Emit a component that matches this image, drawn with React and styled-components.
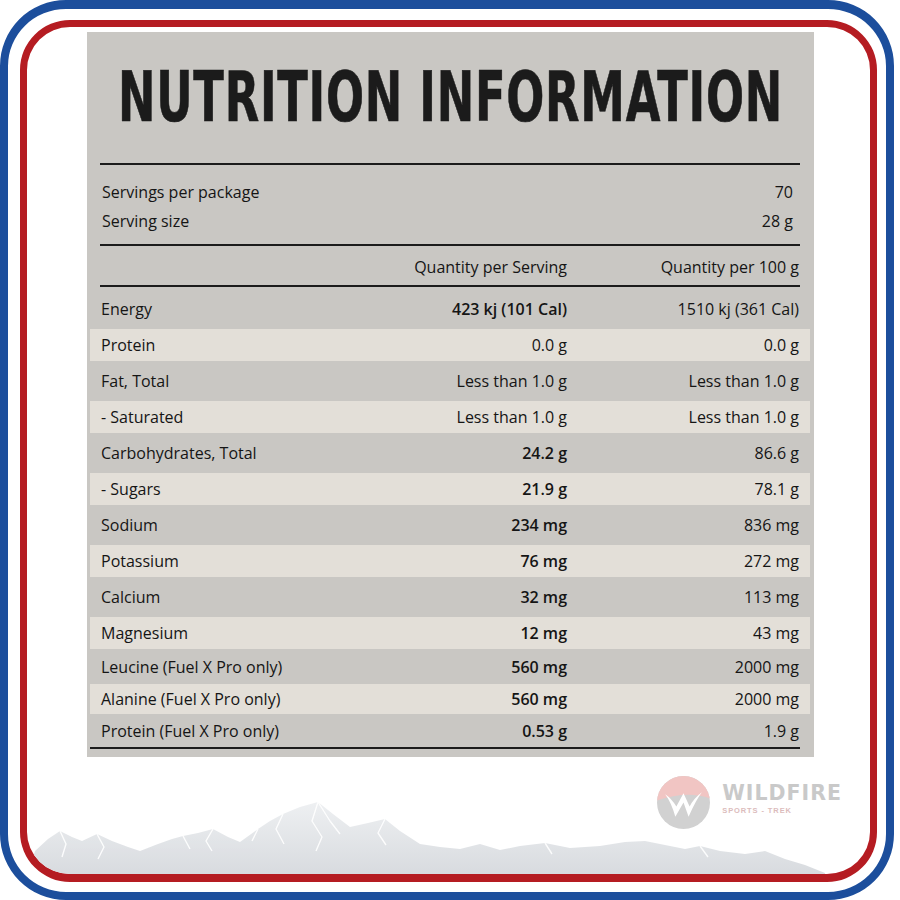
import React from "react";
import styled, { createGlobalStyle } from "styled-components";

const Global = createGlobalStyle`
  html, body { margin: 0; padding: 0; background: #ffffff; }
  body { font-family: "Open Sans", "Liberation Sans", sans-serif; }
`;

const OuterFrame = styled.div`
  box-sizing: border-box;
  width: 894px;
  height: 900px;
  border: 8px solid #1c4e9c;
  border-top-width: 9px;
  border-radius: 66px;
  padding: 11px 9px 10px 12px;
  background: #ffffff;
`;

const InnerFrame = styled.div`
  box-sizing: border-box;
  height: 100%;
  border: 7px solid #b51c22;
  border-bottom-width: 8px;
  border-radius: 50px;
  overflow: hidden;
  display: flex;
  flex-direction: column;
  background: #ffffff;
`;

const Panel = styled.section`
  margin: 5px 56px 0 60px;
  background: #c9c7c3;
  padding-bottom: 8px;
  color: #151515;
`;

const Title = styled.div`
  height: 131px;
  display: flex;
  align-items: center;
  justify-content: center;
  overflow: hidden;
`;

const TitleText = styled.h1`
  margin: 0;
  font-family: "DejaVu Sans Condensed", "DejaVu Sans", sans-serif;
  font-weight: 700;
  font-size: 69px;
  line-height: 1;
  color: #1b1b1b;
  white-space: nowrap;
  transform: scaleX(0.722);
  letter-spacing: 1px;
  -webkit-text-stroke: 0.6px #1b1b1b;
`;

const Rule = styled.div`
  height: 2px;
  background: #1b1b1b;
  margin: ${(p) => (p.$wide ? "0 14px 0 3px" : "0 14px 0 13px")};
`;

const Servings = styled.div`
  padding: 12px 21px 9px 15px;
`;

const ServLine = styled.div`
  display: flex;
  justify-content: space-between;
  align-items: center;
  height: 29px;
  font-size: 16px;
`;

const Table = styled.div`
  margin: 0 4px 0 3px;
`;

const Row = styled.div`
  box-sizing: border-box;
  display: grid;
  grid-template-columns: 1fr 200px 232px;
  align-items: center;
  height: ${(p) => p.$h}px;
  padding: 0 11px;
  border-top: ${(p) => p.$inset}px solid transparent;
  border-bottom: ${(p) => p.$inset}px solid transparent;
  background: ${(p) => (p.$light ? "#e3dfd8" : "transparent")};
  background-clip: padding-box;
  font-size: 16px;
  white-space: nowrap;
`;

const HeaderRow = styled(Row)`
  padding-top: 3px;
`;

const Rows = styled.div`
  margin: 4px 4px 0 3px;
`;

const Cell = styled.span`
  text-align: ${(p) => (p.$right ? "right" : "left")};
  font-weight: ${(p) => (p.$bold ? 600 : 400)};
`;

const Footer = styled.div`
  position: relative;
  flex: 1;
  display: flex;
  justify-content: flex-end;
  padding: 19px 28px 0 0;
`;

const Mountains = styled.svg`
  position: absolute;
  left: 0;
  bottom: 0;
  width: 843px;
  height: 117px;
`;

const Logo = styled.div`
  position: relative;
  display: flex;
  align-items: flex-start;
  gap: 12px;
  height: 52px;
`;

const LogoMark = styled.svg`
  width: 53px;
  height: 53px;
  flex: none;
`;

const Brand = styled.div`
  display: flex;
  flex-direction: column;
  padding-top: 7px;
`;

const BrandName = styled.span`
  font-family: "DejaVu Sans", "Liberation Sans", sans-serif;
  font-weight: 700;
  font-size: 20.5px;
  line-height: 20px;
  letter-spacing: 1px;
  color: #c9c9c9;
`;

const BrandSub = styled.span`
  font-family: "Liberation Sans", sans-serif;
  font-weight: 700;
  font-size: 7.5px;
  letter-spacing: 0.9px;
  margin-top: 3px;
  color: #dcbcbc;
`;

const rows = [
  ["Energy", "423 kj (101 Cal)", "1510 kj (361 Cal)", true],
  ["Protein", "0.0 g", "0.0 g", false],
  ["Fat, Total", "Less than 1.0 g", "Less than 1.0 g", false],
  ["- Saturated", "Less than 1.0 g", "Less than 1.0 g", false],
  ["Carbohydrates, Total", "24.2 g", "86.6 g", true],
  ["- Sugars", "21.9 g", "78.1 g", true],
  ["Sodium", "234 mg", "836 mg", true],
  ["Potassium", "76 mg", "272 mg", true],
  ["Calcium", "32 mg", "113 mg", true],
  ["Magnesium", "12 mg", "43 mg", true],
  ["Leucine (Fuel X Pro only)", "560 mg", "2000 mg", true, true],
  ["Alanine (Fuel X Pro only)", "560 mg", "2000 mg", true, true],
  ["Protein (Fuel X Pro only)", "0.53 g", "1.9 g", true, true],
];

const mountainPath =
  "M 28 875 L 35 852 L 48 840 L 60 832 L 72 838 L 82 842 L 97 835 L 112 842 L 128 848 L 140 852 L 158 845 L 172 840 L 183 837 L 198 834 L 213 830 L 228 838 L 240 843 L 258 830 L 270 822 L 283 815 L 300 808 L 318 803 L 333 815 L 350 828 L 368 824 L 385 820 L 400 832 L 420 845 L 440 848 L 460 850 L 480 845 L 500 851 L 520 847 L 545 844 L 570 849 L 600 847 L 625 843 L 645 842 L 665 846 L 685 850 L 700 847 L 720 852 L 745 855 L 765 852 L 785 860 L 805 866 L 825 874 L 825 875 Z";

export default function App() {
  return (
    <>
      <Global />
      <OuterFrame>
        <InnerFrame>
          <Panel>
            <Title>
              <TitleText>NUTRITION INFORMATION</TitleText>
            </Title>
            <Rule />
            <Servings>
              <ServLine>
                <span>Servings per package</span>
                <span>70</span>
              </ServLine>
              <ServLine>
                <span>Serving size</span>
                <span>28 g</span>
              </ServLine>
            </Servings>
            <Rule />
            <Table>
              <HeaderRow $h={39} $inset={0}>
                <Cell />
                <Cell $right>Quantity per Serving</Cell>
                <Cell $right>Quantity per 100 g</Cell>
              </HeaderRow>
            </Table>
            <Rule />
            <Rows>
              {rows.map(([label, a, b, bold, compact], i) => (
                <Row
                  key={label}
                  $h={compact ? 32 : 36}
                  $inset={compact ? 1 : 2}
                  $light={i % 2 === 1}
                >
                  <Cell>{label}</Cell>
                  <Cell $right $bold={bold}>
                    {a}
                  </Cell>
                  <Cell $right>{b}</Cell>
                </Row>
              ))}
            </Rows>
            <Rule $wide />
          </Panel>
          <Footer>
            <Mountains viewBox="27 758 843 117" preserveAspectRatio="none">
              <defs>
                <linearGradient id="mtn" x1="0" y1="0" x2="0" y2="1">
                  <stop offset="0" stopColor="#eef0f2" />
                  <stop offset="1" stopColor="#d8dbdf" />
                </linearGradient>
              </defs>
              <path d={mountainPath} fill="url(#mtn)" />
              <g fill="none" stroke="#ffffff" strokeWidth="1.4" strokeLinejoin="round" opacity="0.9">
                <polyline points="60,832 66,845 62,858" />
                <polyline points="97,835 104,848 98,860" />
                <polyline points="213,830 206,842 212,852" />
                <polyline points="283,815 276,830 284,845" />
                <polyline points="318,803 312,822 322,838 316,852" />
                <polyline points="318,803 330,822 340,835" />
                <polyline points="385,820 378,834 386,846" />
                <polyline points="258,830 252,842" />
                <polyline points="183,837 190,850" />
                <polyline points="545,844 552,855" />
                <polyline points="700,847 708,858" />
              </g>
            </Mountains>
            <Logo>
              <LogoMark viewBox="0 0 52 52">
                <defs>
                  <clipPath id="circ">
                    <circle cx="26" cy="26" r="26" />
                  </clipPath>
                </defs>
                <g clipPath="url(#circ)">
                  <rect x="0" y="0" width="52" height="52" fill="#d1d1d1" />
                  <path d="M 0 0 H 52 V 22 Q 30 14 0 24 Z" fill="#f1c5c3" />
                  <path
                    d="M 8 18 Q 14 26 18 40 L 26 26 L 31 40 Q 38 24 44 16 Q 36 22 32 30 L 26 17 L 19 30 Q 14 22 8 18 Z"
                    fill="#ffffff"
                  />
                </g>
              </LogoMark>
              <Brand>
                <BrandName>WILDFIRE</BrandName>
                <BrandSub>SPORTS - TREK</BrandSub>
              </Brand>
            </Logo>
          </Footer>
        </InnerFrame>
      </OuterFrame>
    </>
  );
}
